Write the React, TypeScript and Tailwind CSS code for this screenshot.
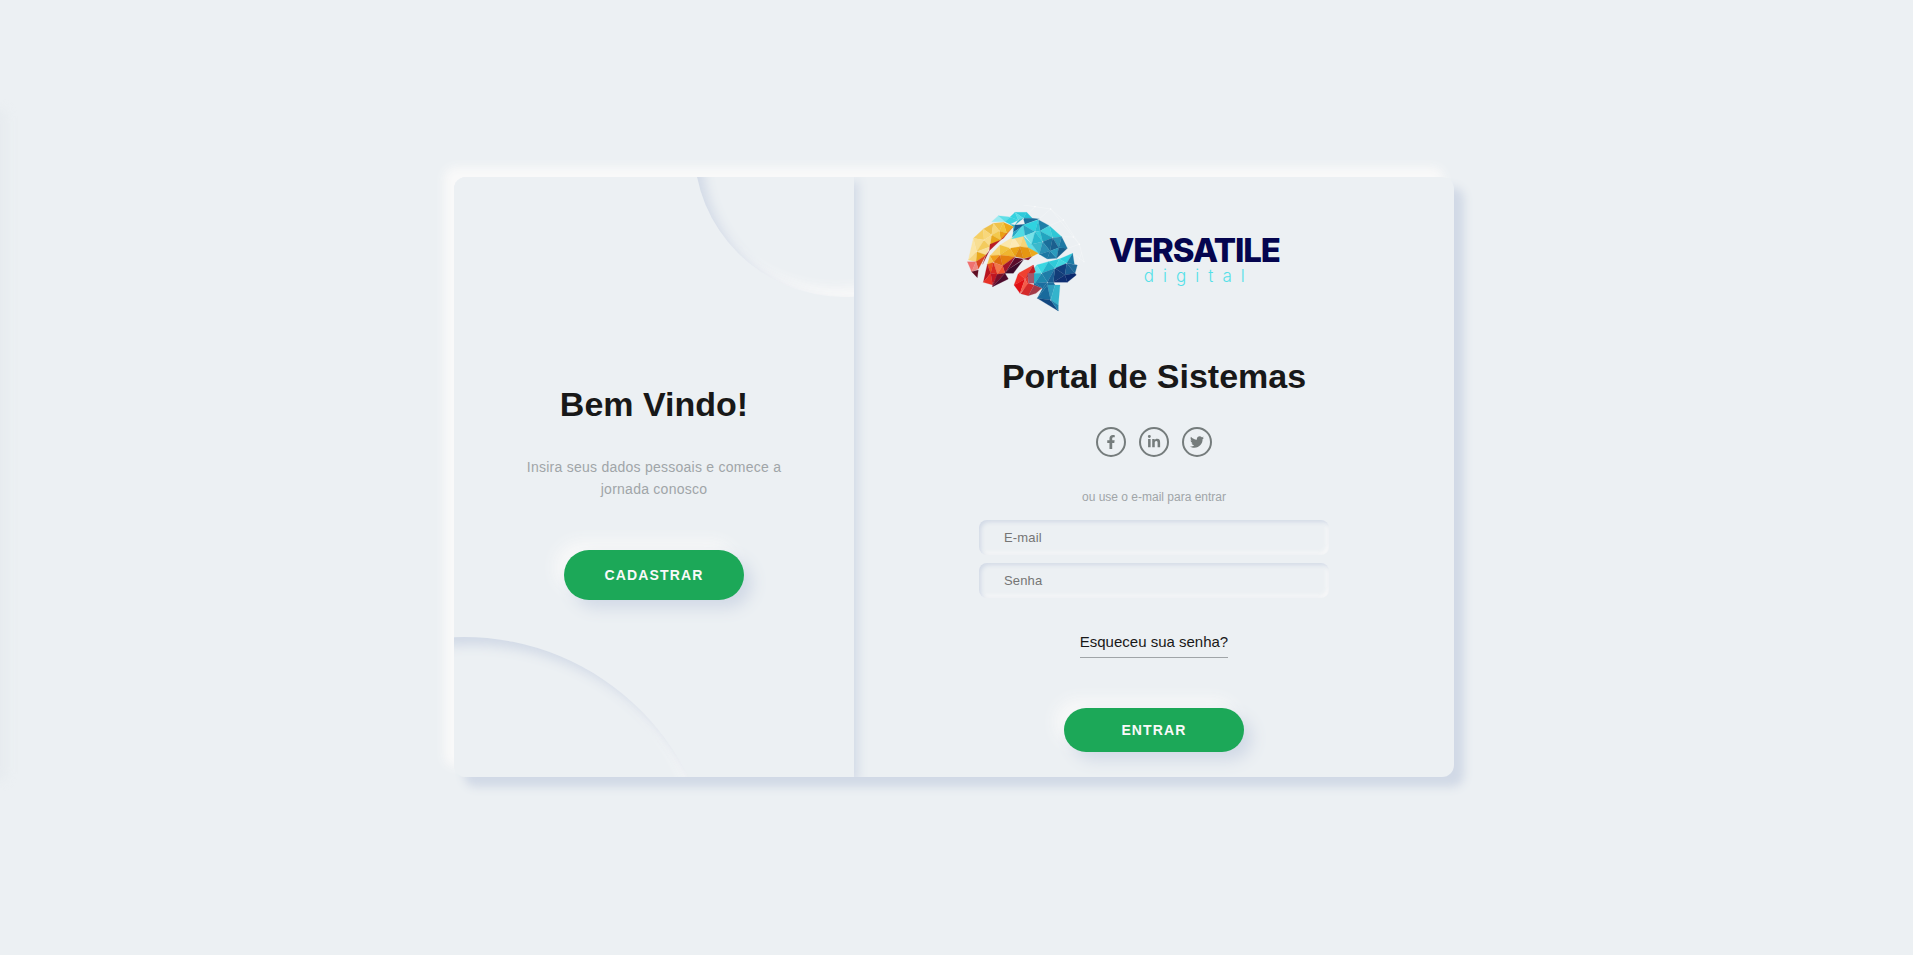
import { FaFacebookF, FaLinkedinIn, FaTwitter } from "react-icons/fa";

const tris: [string, string][] = [
  // top cyan cap
  ["#9deaf0", "95,50 115,32 135,50"],
  ["#5fdfe8", "115,32 150,36 135,50"],
  ["#35d3e0", "150,36 165,22 175,45"],
  ["#2fcbdb", "165,22 200,22 190,40"],
  ["#58dde6", "165,22 190,40 175,45"],
  ["#27c4d6", "200,22 217,40 190,40"],
  ["#3ad4e0", "135,50 150,36 175,45 150,58"],
  ["#2fb6c9", "175,45 190,40 165,60"],
  ["#2fb6c9", "150,58 165,60 160,82 160,65"],
  ["#1c6f9b", "190,40 217,40 238,42 195,58"],
  ["#1a5f8e", "165,60 195,58 160,82"],
  ["#2aa6c4", "160,82 195,58 190,60 155,102"],
  // upper-left yellow lobe
  ["#f5cf64", "40,100 70,72 72,105"],
  ["#eec04b", "70,72 100,55 95,90"],
  ["#f8d77a", "70,72 95,90 72,105"],
  ["#f0c24a", "100,55 130,52 118,78"],
  ["#f7d778", "100,55 118,78 95,90"],
  ["#eba91a", "130,52 160,65 140,85"],
  ["#f2c53e", "130,52 140,85 118,78"],
  ["#ea9d14", "118,78 140,85 122,105"],
  ["#f3c84c", "95,90 118,78 122,105"],
  ["#f9dc8a", "72,105 95,90 90,125"],
  ["#e9a81c", "95,90 122,105 90,125"],
  ["#e2710f", "140,85 160,65 130,100"],
  ["#c9261b", "122,105 140,85 130,100"],
  ["#f8de92", "40,100 72,105 50,140"],
  ["#f3cb5d", "72,105 90,125 50,140"],
  ["#fbe5a5", "40,100 50,140 25,165"],
  ["#f9e09a", "50,140 90,125 78,150"],
  ["#e9a81c", "50,140 78,150 48,170"],
  ["#f7d57d", "25,165 50,140 48,170"],
  ["#b81c24", "90,118 122,105 88,137"],
  ["#a11620", "78,150 88,137 68,178"],
  ["#d9431f", "48,170 78,150 55,192"],
  ["#f0706f", "22,170 48,170 35,200"],
  ["#ef8a84", "48,170 55,192 35,200"],
  ["#5f0d22", "35,200 55,195 52,218"],
  // middle lobe
  ["#fbe7ab", "120,120 160,95 150,130"],
  ["#f8dc8f", "160,95 190,92 180,125"],
  ["#fde9b4", "160,95 180,125 150,130"],
  ["#f6d478", "190,92 205,128 180,125"],
  ["#62dde6", "190,92 215,118 238,148 205,128"],
  ["#f2c33f", "120,120 150,130 120,150"],
  ["#f7d679", "90,152 120,120 120,150"],
  ["#eaa316", "150,130 180,125 165,155"],
  ["#f0b52f", "120,150 150,130 165,155"],
  ["#e69612", "180,125 205,128 215,155 190,160"],
  ["#eca91d", "205,128 235,145 215,155"],
  ["#dd8410", "165,155 180,125 190,160"],
  ["#e57f10", "120,150 165,155 128,182"],
  ["#a3152a", "128,182 165,155 135,205"],
  ["#ef9d1a", "90,152 120,150 100,172"],
  ["#dd6a12", "100,172 120,150 128,182"],
  ["#f3c24d", "82,178 90,152 100,172"],
  ["#e8521b", "82,178 100,172 92,205"],
  ["#f2774a", "100,172 128,182 112,208"],
  ["#d92b20", "92,205 100,172 112,208"],
  ["#b8141f", "70,232 82,178 92,205"],
  ["#e83227", "70,232 92,205 98,240"],
  ["#c01722", "92,205 112,208 98,240"],
  ["#f0542f", "112,208 128,182 135,205"],
  // maroon
  ["#7a0f2a", "98,240 112,208 112,212 98,245"],
  ["#7a0f2a", "98,245 112,208 135,205"],
  ["#4e0b2c", "98,245 135,205 145,222"],
  ["#5a0b2a", "135,205 165,158 190,162 150,190"],
  ["#3d0a2a", "135,205 150,190 190,165 160,205"],
  ["#8f1224", "190,162 215,155 205,165"],
  // right teal
  ["#2fd3e0", "190,60 235,44 225,80"],
  ["#50dce4", "155,102 190,60 195,92"],
  ["#2aa6c4", "190,60 225,80 195,92"],
  ["#1d7fa8", "235,44 268,62 240,78"],
  ["#29bfd2", "225,80 235,44 240,78"],
  ["#40cfdc", "240,78 268,62 278,98"],
  ["#74e2e8", "195,92 225,80 215,118"],
  ["#38cddb", "225,80 240,78 248,110"],
  ["#2bb9ce", "225,80 248,110 215,118"],
  ["#22a4bf", "240,78 278,98 248,110"],
  ["#2fc7d6", "268,62 305,95 278,98"],
  ["#2b91b3", "278,98 305,95 296,128"],
  ["#1a6e9a", "248,110 278,98 270,138"],
  ["#1b5f8e", "278,98 296,128 270,138"],
  ["#3bb9cc", "215,118 248,110 238,148"],
  ["#2a8fb4", "248,110 270,138 238,148"],
  ["#1d77a3", "238,148 270,138 262,162"],
  ["#1d77a3", "262,162 270,138 290,160"],
  ["#2b9bbd", "270,138 296,128 290,160"],
  ["#175d8a", "296,128 322,130 290,160"],
  ["#1e78a4", "305,95 322,130 296,128"],
  // lower right
  ["#39d7e2", "230,180 265,170 245,205"],
  ["#5fe0e8", "210,205 230,180 245,205"],
  ["#2fcad9", "265,170 298,162 285,190"],
  ["#24b4cb", "245,205 265,170 285,190"],
  ["#2ccfdd", "298,162 338,145 320,175"],
  ["#41d6e0", "298,162 320,175 285,190"],
  ["#1d7ca6", "338,145 343,178 320,175"],
  ["#1f6a99", "320,175 352,180 345,205"],
  ["#123f7e", "285,190 320,175 315,210"],
  ["#1b5d92", "320,175 345,205 315,210"],
  ["#0b2a6e", "315,210 345,205 349,210 322,232"],
  ["#133d78", "285,190 315,210 280,232"],
  ["#0f2f72", "315,210 322,232 280,232"],
  ["#1f7da8", "245,205 285,190 262,232"],
  ["#1a5f95", "285,190 280,232 262,232"],
  ["#2ab0c8", "210,205 245,205 225,235"],
  ["#2ab0c8", "222,205 210,205 225,235 222,235"],
  ["#1f87ad", "245,205 262,232 225,235"],
  ["#1c6ea0", "225,235 262,232 248,250"],
  ["#1c6ea0", "222,235 225,235 248,250 245,250 222,240"],
  // lower red
  ["#f04030", "175,205 220,180 195,222"],
  ["#c21c24", "220,180 226,200 195,222"],
  ["#e33a2e", "195,222 226,200 222,205 203,205 205,235 205,240"],
  ["#ef2a24", "162,240 175,205 195,222"],
  ["#e00f14", "162,240 195,222 180,265"],
  ["#a5566a", "203,205 222,205 222,235 205,235"],
  ["#f45c4a", "195,222 205,240 180,265"],
  ["#d42a2a", "205,235 222,240 205,272 182,266"],
  ["#a33a48", "222,240 245,250 228,265 205,272"],
  // spike
  ["#1f6fa0", "262,232 280,232 285,240 262,240"],
  ["#1a6e9c", "248,250 262,232 262,240 232,280"],
  ["#2f9fc0", "262,240 285,240 272,285"],
  ["#186a9c", "232,280 262,240 272,285"],
  ["#34b4cc", "285,240 300,240 295,300 272,285"],
  ["#12477f", "232,280 272,285 295,318"],
  ["#1e82ac", "272,285 295,300 295,318"],
];

const lines =
  "M190 40 L225 5 L272 12 L310 45 L358 118 L372 170 M235 44 L272 12 L340 96 L358 118 M268 62 L310 45 M305 95 L340 96 M322 130 L358 118 M338 145 L372 170 M352 180 L365 142 M225 5 L190 0";
const nodes: [number, number, number][] = [
  [225, 5, 2], [272, 12, 2.2], [310, 45, 2], [340, 96, 2], [358, 118, 2.5], [372, 170, 1.5], [190, 40, 1.6], [235, 44, 1.6], [268, 62, 1.6], [278, 98, 1.6], [225, 80, 1.6], [248, 110, 1.6], [195, 92, 1.6], [150, 36, 1.4], [175, 45, 1.4], [95, 90, 1.6], [72, 105, 1.6], [118, 78, 1.4], [50, 140, 1.5], [150, 130, 1.6], [120, 150, 1.6], [165, 155, 1.4], [100, 172, 1.5], [245, 205, 1.6], [285, 190, 1.6], [262, 232, 1.5], [272, 285, 1.8], [175, 205, 1.4], [195, 222, 1.4], [320, 175, 1.5],
];

function Brain() {
  return (
    <svg viewBox="0 0 390 330" className="h-[110px] w-[130px] shrink-0">
      <path d={lines} fill="none" stroke="#ffffff" strokeWidth="1.2" opacity="0.6" />
      {tris.map(([c, p], i) => (
        <polygon key={i} points={p} fill={c} stroke={c} strokeWidth="0.6" />
      ))}
      {nodes.map(([x, y, r], i) => (
        <circle key={i} cx={x} cy={y} r={r} fill="#ffffff" opacity="0.85" />
      ))}
    </svg>
  );
}

const social = [FaFacebookF, FaLinkedinIn, FaTwitter];

export default function App() {
  return (
    <div className="relative flex min-h-screen items-center justify-center overflow-hidden bg-[#ecf0f3] pb-[1px] pr-[5px] font-['Liberation_Sans',Arial,sans-serif] text-[#181818]">
      <div className="absolute left-[-8px] top-[110px] h-[670px] w-[14px] bg-[#d9dee4] opacity-30 blur-[6px]" />
      <div className="flex h-[600px] w-[1000px] overflow-hidden rounded-xl bg-[#ecf0f3] shadow-[10px_10px_10px_#d1d9e6,-10px_-10px_10px_#f9f9f9]">
        <section className="relative z-10 flex h-full w-[400px] shrink-0 flex-col items-center overflow-hidden bg-[#ecf0f3] pt-[207px] shadow-[4px_4px_10px_#d1d9e6,-4px_-4px_10px_#f9f9f9]">
          <div className="absolute left-[240px] top-[-180px] size-[300px] rounded-full bg-[#ecf0f3] shadow-[inset_8px_8px_12px_#d1d9e6,inset_-8px_-8px_12px_#f9f9f9]" />
          <div className="absolute bottom-[-360px] left-[-240px] size-[500px] rounded-full bg-[#ecf0f3] shadow-[inset_8px_8px_12px_#d1d9e6,inset_-8px_-8px_12px_#f9f9f9]" />
          <div className="relative flex flex-col items-center">
            <h2 className="text-[34px] font-bold leading-[40px]">Bem Vindo!</h2>
            <p className="mt-[31.5px] w-[300px] text-center text-[14px] leading-[22.4px] tracking-[0.25px] text-[#a0a5a8]">
              Insira seus dados pessoais e comece a jornada conosco
            </p>
            <button className="mt-[49.5px] h-[50px] w-[180px] rounded-[25px] bg-[#1ca858] pt-[1px] text-[14px] font-bold tracking-[1.15px] text-[#f9f9f9] shadow-[8px_8px_16px_#d1d9e6,-8px_-8px_16px_#f9f9f9]">
              CADASTRAR
            </button>
          </div>
        </section>
        <main className="flex h-full w-[600px] flex-col items-center pt-[28px]">
          <div className="flex h-[110px] w-[388px] shrink-0 items-center">
            <Brain />
            <div className="mb-[1px] ml-[19px] flex flex-col items-center">
              <span className="whitespace-nowrap font-['Inter',sans-serif] text-[33px] font-extrabold leading-[30px] tracking-[-1.2px] text-[#05054f]">
                VERSATILE
              </span>
              <span className="mt-[2px] whitespace-nowrap pl-[9px] font-['Inter',sans-serif] text-[17px] font-light leading-[18px] tracking-[9px] text-[#55e0e8]">
                digital
              </span>
            </div>
          </div>
          <h2 className="mt-[41px] text-[34px] font-bold leading-[40px]">Portal de Sistemas</h2>
          <div className="mt-[31px] flex gap-[13px]">
            {social.map((Icon, i) => (
              <a key={i} className="flex size-[30px] items-center justify-center rounded-full border-2 border-[#757c7c] text-[#757c7c]">
                <Icon className="size-[14px]" />
              </a>
            ))}
          </div>
          <span className="mt-[32px] text-[12px] leading-[16px] text-[#a0a5a8]">ou use o e-mail para entrar</span>
          <input
            placeholder="E-mail"
            className="mt-[15px] h-[35px] w-[350px] rounded-lg bg-[#ecf0f3] pl-[25px] text-[13px] tracking-[0.15px] shadow-[inset_2px_2px_4px_#d1d9e6,inset_-2px_-2px_4px_#f9f9f9] outline-none placeholder:text-[#757575]"
          />
          <input
            placeholder="Senha"
            className="mt-[8px] h-[35px] w-[350px] rounded-lg bg-[#ecf0f3] pl-[25px] text-[13px] tracking-[0.15px] shadow-[inset_2px_2px_4px_#d1d9e6,inset_-2px_-2px_4px_#f9f9f9] outline-none placeholder:text-[#757575]"
          />
          <a className="mt-[34px] border-b border-[#a0a5a8] pb-[5px] text-[15px] leading-[20px]">Esqueceu sua senha?</a>
          <button className="mt-[50px] h-[44px] w-[180px] rounded-[25px] bg-[#1ca858] text-[14px] font-bold tracking-[1.15px] text-[#f9f9f9] shadow-[8px_8px_16px_#d1d9e6,-8px_-8px_16px_#f9f9f9]">
            ENTRAR
          </button>
        </main>
      </div>
    </div>
  );
}
